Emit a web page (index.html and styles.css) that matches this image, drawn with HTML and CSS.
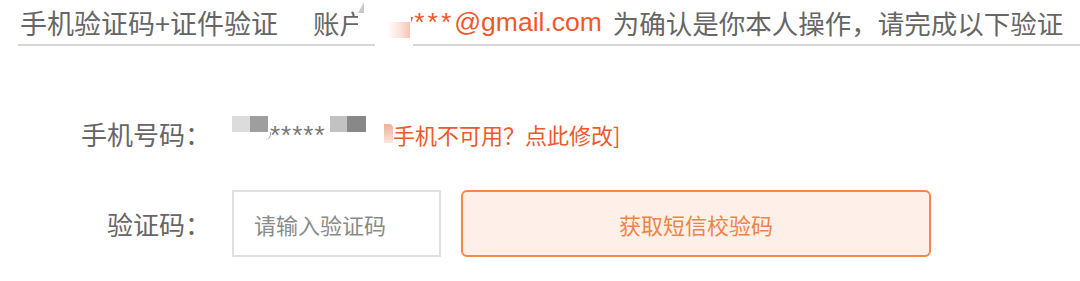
FILE: index.html
```html
<!DOCTYPE html>
<html lang="zh-CN">
<head>
<meta charset="utf-8">
<title>手机验证码+证件验证</title>
<link rel="stylesheet" href="styles.css">
</head>
<body>
<div class="page">
  <div class="head">
    <span class="title">手机验证码+证件验证</span>
    <span class="acct">账户</span><span class="hidden-gap"></span><span class="email">y<span class="ast">***</span>@gmail.com</span><span class="tip">为确认是你本人操作，请完成以下验证</span>
    <div class="mask"><i class="tri"></i><i class="blush"></i></div>
    <div class="mask-line"></div>
  </div>
  <div class="form">
    <div class="row">
      <div class="label">手机号码：</div>
      <div class="value phone">
        <span class="blk b1"></span><span class="blk b2"><i class="tail"></i></span><span class="stars">*****</span><span class="blk b3"></span><span class="blk b4"></span>
        <span class="pink"></span><a class="link" href="#">手机不可用？点此修改]</a>
      </div>
    </div>
    <div class="row">
      <div class="label">验证码：</div>
      <div class="value">
        <input class="code" type="text" placeholder="请输入验证码">
        <button class="send" type="button">获取短信校验码</button>
      </div>
    </div>
  </div>
</div>
</body>
</html>
```
FILE: styles.css
```css
html, body {
  margin: 0;
  padding: 0;
  background: #ffffff;
}
body {
  font-family: "Noto Sans CJK SC", "Noto Sans", sans-serif;
  color: #666666;
}
.page {
  width: 1080px;
  height: 281px;
  overflow: hidden;
}
.head {
  position: relative;
  margin-left: 18px;
  padding-left: 2px;
  height: 44px;
  border-bottom: 2px solid #d6d6d6;
  display: flex;
  align-items: center;
  font-size: 26.5px;
  white-space: nowrap;
  color: #666666;
}
.title {
  font-size: 27px;
  margin-right: 35px;
}
.hidden-gap {
  display: inline-block;
  width: 34px;
}
.email {
  font-family: "Liberation Sans", "Noto Sans CJK SC", sans-serif;
  color: #f0582a;
}
.ast {
  letter-spacing: 3px;
  margin-left: 1px;
}
.tip {
  margin-left: 11px;
}
.mask {
  position: absolute;
  left: 340px;
  top: 0;
  width: 53px;
  height: 40px;
  background: #ffffff;
}
.tri {
  position: absolute;
  left: 0;
  top: 2px;
  width: 6px;
  height: 11px;
  background: #c9c9c9;
  clip-path: polygon(100% 0, 100% 100%, 0 100%);
}
.blush {
  position: absolute;
  left: 29px;
  top: 22px;
  width: 23px;
  height: 21px;
  background: linear-gradient(to right, rgba(252, 220, 210, 0) 0%, rgba(250, 205, 190, 0.6) 60%, #f8c4b2 100%);
}
.mask-line {
  position: absolute;
  left: 357px;
  top: 38px;
  width: 38px;
  height: 10px;
  background: #ffffff;
}
.form {
  margin-top: 54px;
}
.row {
  display: flex;
  align-items: center;
  height: 67px;
  gap: 21px;
}
.row + .row {
  margin-top: 23px;
}
.label {
  width: 211px;
  text-align: right;
  font-size: 26px;
  color: #666666;
  flex: none;
}
.value {
  display: flex;
  align-items: center;
}
.phone {
  font-size: 22px;
}
.blk {
  display: inline-block;
  width: 18px;
  height: 16px;
  margin-bottom: 19px;
  position: relative;
}
.b1 { background: #dcdcdc; }
.b2 { background: #9e9e9e; }
.b3 { background: #c2c2c2; width: 17px; }
.b4 { background: #888888; width: 19px; }
.tail {
  position: absolute;
  right: -3px;
  bottom: -8px;
  width: 5px;
  height: 8px;
  border-right: 1.5px solid #9e9e9e;
  border-bottom-right-radius: 6px;
}
.stars {
  color: #777777;
  width: 60px;
  letter-spacing: 1px;
  padding-left: 2px;
  font-family: "Liberation Sans", sans-serif;
  font-size: 26px;
  margin-top: 4px;
}
.pink {
  display: inline-block;
  width: 9px;
  height: 19px;
  margin-left: 18px;
  background: linear-gradient(to bottom, #f7ac94, rgba(250, 190, 170, 0.4));
  border-top-right-radius: 4px;
}
.link {
  color: #f0582a;
  text-decoration: none;
  font-size: 22px;
}
.code {
  box-sizing: border-box;
  width: 209px;
  height: 67px;
  border: 2px solid #e0e0e0;
  padding: 0 0 0 20px;
  font-family: "Noto Sans CJK SC", sans-serif;
  font-size: 22px;
  color: #555555;
  outline: none;
  background: #ffffff;
}
.code::placeholder {
  color: #8a8a8a;
}
.send {
  box-sizing: border-box;
  width: 470px;
  height: 67px;
  margin-left: 20px;
  border: 2px solid #f5884a;
  border-radius: 6px;
  background: #fef0e8;
  color: #f08446;
  font-family: "Noto Sans CJK SC", sans-serif;
  font-size: 22px;
  padding: 0;
}
```
